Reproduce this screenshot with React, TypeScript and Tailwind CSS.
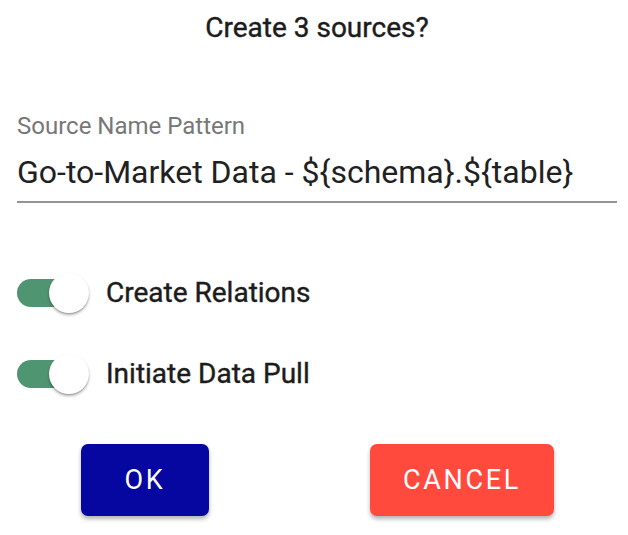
import React, { useState } from "react";

function Toggle({ label, checked, onChange }: { label: string; checked: boolean; onChange: () => void }) {
  return (
    <div className="flex items-center h-[40px]">
      <button type="button" onClick={onChange} className="relative w-[72px] h-[40px] flex items-center shrink-0">
        <span className={`block w-[68px] h-[28px] rounded-full ${checked ? "bg-[#4f9572]" : "bg-[#bdbdbd]"}`} />
        <span
          className={`absolute top-0 ${checked ? "left-[32px]" : "left-0"} w-[40px] h-[40px] rounded-full bg-white shadow-[0_2px_3px_rgba(0,0,0,0.3),0_1px_1px_rgba(0,0,0,0.14)]`}
        />
      </button>
      <span className="ml-[17px] text-[28px] leading-[30px] font-normal text-[#1c1c1c] [-webkit-text-stroke:0.4px_#1c1c1c]">
        {label}
      </span>
    </div>
  );
}

export default function App() {
  const [relations, setRelations] = useState(true);
  const [pull, setPull] = useState(true);

  return (
    <div className="w-[628px] h-[535px] bg-white px-[17px] font-['Roboto',sans-serif]">
      <h1 className="pt-[10px] text-center text-[28px] leading-[36px] font-normal text-[#1c1c1c] pl-[6px] [-webkit-text-stroke:0.4px_#1c1c1c]">
        Create 3 sources?
      </h1>

      <div className="mt-[68px] w-[600px]">
        <div className="text-[24px] leading-[24px] text-[#777]">Source Name Pattern</div>
        <div className="mt-[16px] pb-[11px] border-b-2 border-[#949494] text-[32px] leading-[36px] text-[#212121] whitespace-nowrap">
          {"Go-to-Market Data - ${schema}.${table}"}
        </div>
      </div>

      <div className="mt-[70px] flex flex-col gap-[41px]">
        <Toggle label="Create Relations" checked={relations} onChange={() => setRelations(!relations)} />
        <Toggle label="Initiate Data Pull" checked={pull} onChange={() => setPull(!pull)} />
      </div>

      <div className="mt-[50px] flex pl-[64px] gap-[161px]">
        <button
          type="button"
          className="w-[128px] h-[72px] rounded-[7px] bg-[#0606a0] text-white text-[27px] tracking-[0.1em] shadow-[0_3px_4px_rgba(0,0,0,0.3)]"
        >
          OK
        </button>
        <button
          type="button"
          className="w-[184px] h-[72px] rounded-[7px] bg-[#ff4a3d] text-white text-[27px] tracking-[0.1em] shadow-[0_3px_4px_rgba(0,0,0,0.3)]"
        >
          CANCEL
        </button>
      </div>
    </div>
  );
}
